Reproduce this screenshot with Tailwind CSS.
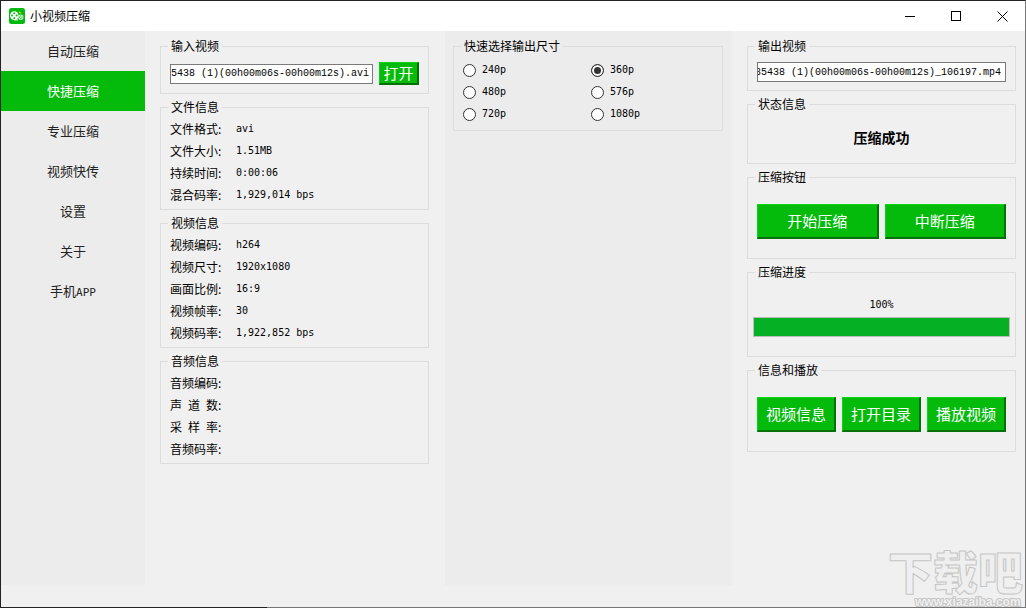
<!DOCTYPE html>
<html lang="zh-CN">
<head>
<meta charset="utf-8">
<title>小视频压缩</title>
<script src="https://cdn.jsdelivr.net/npm/@tailwindcss/browser@4"></script>
</head>
<body class="relative flex min-h-screen flex-col overflow-x-hidden border-t border-l border-r border-t-[#222] border-l-[#222] border-r-[#777] bg-[#f0f0f0] font-['Noto_Sans_CJK_SC',sans-serif] text-xs/4 text-black">
<header class="flex h-[30px] items-center bg-white pl-2">
  <svg class="size-4" viewBox="0 0 16 16" aria-hidden="true">
    <rect width="16" height="16" rx="2.5" fill="#04b90f"/>
    <circle cx="5.3" cy="7.6" r="4.3" fill="#fff"/>
    <g fill="#04b90f"><circle cx="5.3" cy="5.3" r="1"/><circle cx="5.3" cy="9.9" r="1"/><circle cx="3" cy="7.6" r="1"/><circle cx="7.6" cy="7.6" r="1"/></g>
    <path d="M5 11.9h4" stroke="#fff"/>
    <circle cx="11.8" cy="9.2" r="2.6" fill="#d8f5da"/>
    <g fill="#04b90f"><circle cx="11.8" cy="7.9" r=".6"/><circle cx="11.8" cy="10.5" r=".6"/><circle cx="10.5" cy="9.2" r=".6"/><circle cx="13.1" cy="9.2" r=".6"/></g>
    <path d="M10 4l2 1.3" stroke="#e8d020" stroke-width="1.2"/>
  </svg>
  <h1 class="ml-[5px]">小视频压缩</h1>
  <div class="ml-auto flex h-full">
    <button aria-label="最小化" class="grid w-[46px] place-items-center"><svg class="size-[11px]" viewBox="0 0 11 11" shape-rendering="crispEdges"><path d="M0 5.5h10" stroke="#000"/></svg></button>
    <button aria-label="最大化" class="grid w-[46px] place-items-center"><svg class="size-[11px]" viewBox="0 0 11 11" shape-rendering="crispEdges"><path d="M.5 .5h9v9h-9z" fill="none" stroke="#000"/></svg></button>
    <button aria-label="关闭" class="grid w-[46px] place-items-center"><svg class="size-[11px]" viewBox="0 0 11 11"><path d="M.5 .5l10 10M10.5 .5l-10 10" stroke="#000"/></svg></button>
  </div>
</header>
<main class="mb-[22px] grid flex-1 grid-cols-[144px_300fr_287fr_293fr]">
  <nav class="flex flex-col bg-[#ececec] text-[13px] text-[#222]">
    <a href="#" class="flex h-10 items-center justify-center">自动压缩</a>
    <a href="#" aria-current="page" class="flex h-10 items-center justify-center bg-[#04bb0c] text-white">快捷压缩</a>
    <a href="#" class="flex h-10 items-center justify-center">专业压缩</a>
    <a href="#" class="flex h-10 items-center justify-center">视频快传</a>
    <a href="#" class="flex h-10 items-center justify-center">设置</a>
    <a href="#" class="flex h-10 items-center justify-center">关于</a>
    <a href="#" class="flex h-10 items-baseline justify-center leading-10">手机<span class="font-['DejaVu_Sans_Mono',monospace] text-[11px]">APP</span></a>
  </nav>

  <section class="flex min-w-0 flex-col gap-[5px] pt-[7px] pr-4 pl-[15px]">
    <fieldset class="min-w-0 border border-[#dcdcdc] px-[9px] py-2">
      <legend class="-ml-0.5 px-[3px]">输入视频</legend>
      <div class="flex items-center gap-1.5">
        <input type="text" aria-label="输入视频" value="5438 (1)(00h00m06s-00h00m12s).avi" class="h-5 min-w-0 flex-1 border border-[#7a7a7a] bg-white font-['Liberation_Mono',monospace] text-[10px]/[18px]">
        <button class="h-[23px] w-10 border-t border-r-2 border-b-2 border-l border-t-[#05d812] border-r-[#047008] border-b-[#047008] border-l-[#05d812] bg-[#04bb0c] text-[15px]/5 text-white">打开</button>
      </div>
    </fieldset>
    <fieldset class="border border-[#dcdcdc] px-[9px] py-[3px]">
      <legend class="-ml-0.5 px-[3px]">文件信息</legend>
      <dl class="grid grid-cols-[66px_1fr] text-xs/[22px]">
        <dt>文件格式:</dt><dd class="font-['DejaVu_Sans_Mono',monospace] text-[10px]/[22px]">avi</dd>
        <dt>文件大小:</dt><dd class="font-['DejaVu_Sans_Mono',monospace] text-[10px]/[22px]">1.51MB</dd>
        <dt>持续时间:</dt><dd class="font-['DejaVu_Sans_Mono',monospace] text-[10px]/[22px]">0:00:06</dd>
        <dt>混合码率:</dt><dd class="font-['DejaVu_Sans_Mono',monospace] text-[10px]/[22px]">1,929,014 bps</dd>
      </dl>
    </fieldset>
    <fieldset class="border border-[#dcdcdc] px-[9px] py-[3px]">
      <legend class="-ml-0.5 px-[3px]">视频信息</legend>
      <dl class="grid grid-cols-[66px_1fr] text-xs/[22px]">
        <dt>视频编码:</dt><dd class="font-['DejaVu_Sans_Mono',monospace] text-[10px]/[22px]">h264</dd>
        <dt>视频尺寸:</dt><dd class="font-['DejaVu_Sans_Mono',monospace] text-[10px]/[22px]">1920x1080</dd>
        <dt>画面比例:</dt><dd class="font-['DejaVu_Sans_Mono',monospace] text-[10px]/[22px]">16:9</dd>
        <dt>视频帧率:</dt><dd class="font-['DejaVu_Sans_Mono',monospace] text-[10px]/[22px]">30</dd>
        <dt>视频码率:</dt><dd class="font-['DejaVu_Sans_Mono',monospace] text-[10px]/[22px]">1,922,852 bps</dd>
      </dl>
    </fieldset>
    <fieldset class="border border-[#dcdcdc] px-[9px] py-[3px]">
      <legend class="-ml-0.5 px-[3px]">音频信息</legend>
      <dl class="grid grid-cols-[66px_1fr] text-xs/[22px]">
        <dt>音频编码:</dt><dd></dd>
        <dt class="flex"><span class="flex w-12 justify-between"><span>声</span> <span>道</span> <span>数</span></span>:</dt><dd></dd>
        <dt class="flex"><span class="flex w-12 justify-between"><span>采</span> <span>样</span> <span>率</span></span>:</dt><dd></dd>
        <dt>音频码率:</dt><dd></dd>
      </dl>
    </fieldset>
  </section>

  <section class="min-w-0 bg-[#ececec] pt-[7px] pr-[9px] pl-2">
    <fieldset class="border border-[#dcdcdc] px-[9px] py-[5px]">
      <legend class="-ml-0.5 px-[3px]">快速选择输出尺寸</legend>
      <div class="grid grid-cols-2 gap-x-1.5 font-['DejaVu_Sans_Mono',monospace] text-[10px]/[22px]">
        <label class="flex h-[22px] items-center gap-1.5"><input type="radio" name="size" class="size-[13px] appearance-none rounded-full border border-[#333] bg-white checked:bg-[#333] checked:inset-ring-2 checked:inset-ring-white">240p</label>
        <label class="flex h-[22px] items-center gap-1.5"><input type="radio" name="size" checked class="size-[13px] appearance-none rounded-full border border-[#333] bg-white checked:bg-[#333] checked:inset-ring-2 checked:inset-ring-white">360p</label>
        <label class="flex h-[22px] items-center gap-1.5"><input type="radio" name="size" class="size-[13px] appearance-none rounded-full border border-[#333] bg-white checked:bg-[#333] checked:inset-ring-2 checked:inset-ring-white">480p</label>
        <label class="flex h-[22px] items-center gap-1.5"><input type="radio" name="size" class="size-[13px] appearance-none rounded-full border border-[#333] bg-white checked:bg-[#333] checked:inset-ring-2 checked:inset-ring-white">576p</label>
        <label class="flex h-[22px] items-center gap-1.5"><input type="radio" name="size" class="size-[13px] appearance-none rounded-full border border-[#333] bg-white checked:bg-[#333] checked:inset-ring-2 checked:inset-ring-white">720p</label>
        <label class="flex h-[22px] items-center gap-1.5"><input type="radio" name="size" class="size-[13px] appearance-none rounded-full border border-[#333] bg-white checked:bg-[#333] checked:inset-ring-2 checked:inset-ring-white">1080p</label>
      </div>
    </fieldset>
  </section>

  <section class="flex min-w-0 flex-col gap-[5px] pt-[7px] pr-[9px] pl-[15px]">
    <fieldset class="min-w-0 border border-[#dcdcdc] px-[9px] py-2">
      <legend class="-ml-0.5 px-[3px]">输出视频</legend>
      <input id="output" type="text" aria-label="输出视频" value="85438 (1)(00h00m06s-00h00m12s)_106197.mp4" class="block h-5 w-full border border-[#7a7a7a] bg-white pr-1 font-['Liberation_Mono',monospace] text-[10px]/[18px]">
    </fieldset>
    <fieldset class="border border-[#dcdcdc] px-[9px]">
      <legend class="-ml-0.5 px-[3px]">状态信息</legend>
      <p class="py-[15px] text-center text-sm/[21px] font-bold">压缩成功</p>
    </fieldset>
    <fieldset class="border border-[#dcdcdc] px-[9px] py-[19px]">
      <legend class="-ml-0.5 px-[3px]">压缩按钮</legend>
      <div class="grid grid-cols-2 gap-1.5">
        <button class="h-[35px] border-t border-r-2 border-b-2 border-l border-t-[#05d812] border-r-[#047008] border-b-[#047008] border-l-[#05d812] bg-[#04bb0c] text-[15px]/5 text-white">开始压缩</button>
        <button class="h-[35px] border-t border-r-2 border-b-2 border-l border-t-[#05d812] border-r-[#047008] border-b-[#047008] border-l-[#05d812] bg-[#04bb0c] text-[15px]/5 text-white">中断压缩</button>
      </div>
    </fieldset>
    <fieldset class="border border-[#dcdcdc] px-[5px] pt-[17px] pb-[19px]">
      <legend class="ml-0.5 px-[3px]">压缩进度</legend>
      <p class="mb-1 text-center font-['DejaVu_Sans_Mono',monospace] text-[10px]/4">100%</p>
      <div role="progressbar" aria-label="压缩进度" aria-valuenow="100" class="h-5 border border-[#bcbcbc]"><div class="h-full bg-[#06b025]" style="width:100%"></div></div>
    </fieldset>
    <fieldset class="border border-[#dcdcdc] px-[9px] py-[19px]">
      <legend class="-ml-0.5 px-[3px]">信息和播放</legend>
      <div class="grid grid-cols-3 gap-1.5">
        <button class="h-[35px] border-t border-r-2 border-b-2 border-l border-t-[#05d812] border-r-[#047008] border-b-[#047008] border-l-[#05d812] bg-[#04bb0c] text-[15px]/5 text-white">视频信息</button>
        <button class="h-[35px] border-t border-r-2 border-b-2 border-l border-t-[#05d812] border-r-[#047008] border-b-[#047008] border-l-[#05d812] bg-[#04bb0c] text-[15px]/5 text-white">打开目录</button>
        <button class="h-[35px] border-t border-r-2 border-b-2 border-l border-t-[#05d812] border-r-[#047008] border-b-[#047008] border-l-[#05d812] bg-[#04bb0c] text-[15px]/5 text-white">播放视频</button>
      </div>
    </fieldset>
  </section>
</main>
<svg class="pointer-events-none absolute right-0 bottom-0 h-[62px] w-[140px]" viewBox="0 0 140 62" aria-hidden="true">
  <g fill="#efefef" stroke="#c6c6c6" stroke-linejoin="round">
    <text x="3" y="44" font-family="Noto Sans CJK SC" font-weight="900" font-size="45" stroke-width="1">下载吧</text>
    <text x="30" y="60" font-family="Liberation Sans" font-weight="700" font-size="12" stroke-width="2" paint-order="stroke">www.xiazaiba.com</text>
  </g>
</svg>
<div class="h-px w-full bg-linear-to-r from-[#222] from-26% to-[#777] to-26%"></div>
<script>
  const output = document.getElementById('output');
  output.scrollLeft = output.scrollWidth;
</script>
</body>
</html>
